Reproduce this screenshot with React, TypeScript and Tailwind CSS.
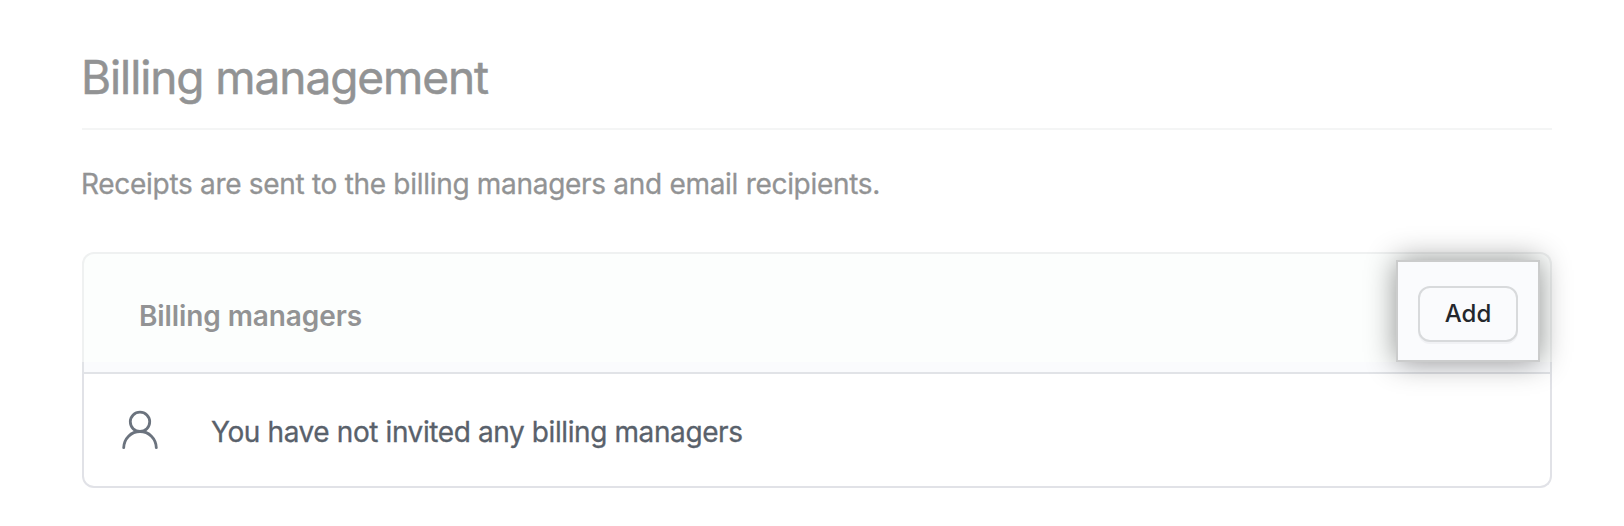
function PersonIcon() {
  return (
    <svg width="40" height="42" viewBox="0 0 40 42" fill="none" stroke="#6b737e" strokeWidth="2.8" strokeLinecap="round" aria-hidden="true">
      <circle cx="20" cy="12.8" r="9.7" />
      <path d="M3.7 38.7C4 29.5 11 22.5 20 22.5S36 29.5 36.3 38.7" />
    </svg>
  );
}

export default function App() {
  return (
    <main className="h-[526px] w-[1624px] overflow-hidden bg-white pr-[72px] pl-[82px] font-['Inter',sans-serif]">
      <h1 className="h-[130px] border-b-2 border-[#f4f5f5] pt-[45px] text-[46px] leading-[64px] tracking-[-1.08px] text-[#929394] [-webkit-text-stroke:0.5px_#929394]">
        <span className="-ml-px">Billing management</span>
      </h1>
      <p className="pt-[34px] text-[28px] leading-[40px] tracking-[-0.3px] text-[#929394] [-webkit-text-stroke:0.3px_#929394]">
        <span className="-ml-px">Receipts are sent to the billing managers and email recipients.</span>
      </p>
      <section className="mt-[48px]">
        <header className="flex h-[110px] justify-between rounded-t-xl border-x-2 border-t-2 border-[#eff1f1] bg-[#fcfefd] pl-[55px]">
          <h2 className="pt-[42px] text-[28px] leading-[40px] font-semibold tracking-[-0.1px] text-[#929394]">
            <span>Billing managers</span>
          </h2>
          <div className="relative z-10 mt-[6px] mr-[10px] flex h-[102px] w-[144px] items-center justify-center border-2 border-[#cbcccc] bg-[#fafbfd] shadow-[0_0_28px_rgba(0,0,0,0.43)]">
            <button className="mt-[6px] h-[56px] w-[100px] rounded-xl border-2 border-[#d8dadc] bg-[#fafbfd] text-[24px] font-medium text-[#24272d] shadow-[0_2px_0_rgba(31,35,40,0.04)]">
              <span>Add</span>
            </button>
          </div>
        </header>
        <div className="h-[12px] border-x-2 border-b-2 border-[#e1e3e7] bg-[#fafbfd]" />
        <div className="flex h-[114px] items-center rounded-b-xl border-x-2 border-b-2 border-[#e1e2e7] pl-[36px]">
          <PersonIcon />
          <p className="mt-[3px] ml-[51px] text-[28px] leading-[40px] tracking-[-0.4px] text-[#59616b] [-webkit-text-stroke:0.3px_#59616b]">
            <span>You have not invited any billing managers</span>
          </p>
        </div>
      </section>
    </main>
  );
}
